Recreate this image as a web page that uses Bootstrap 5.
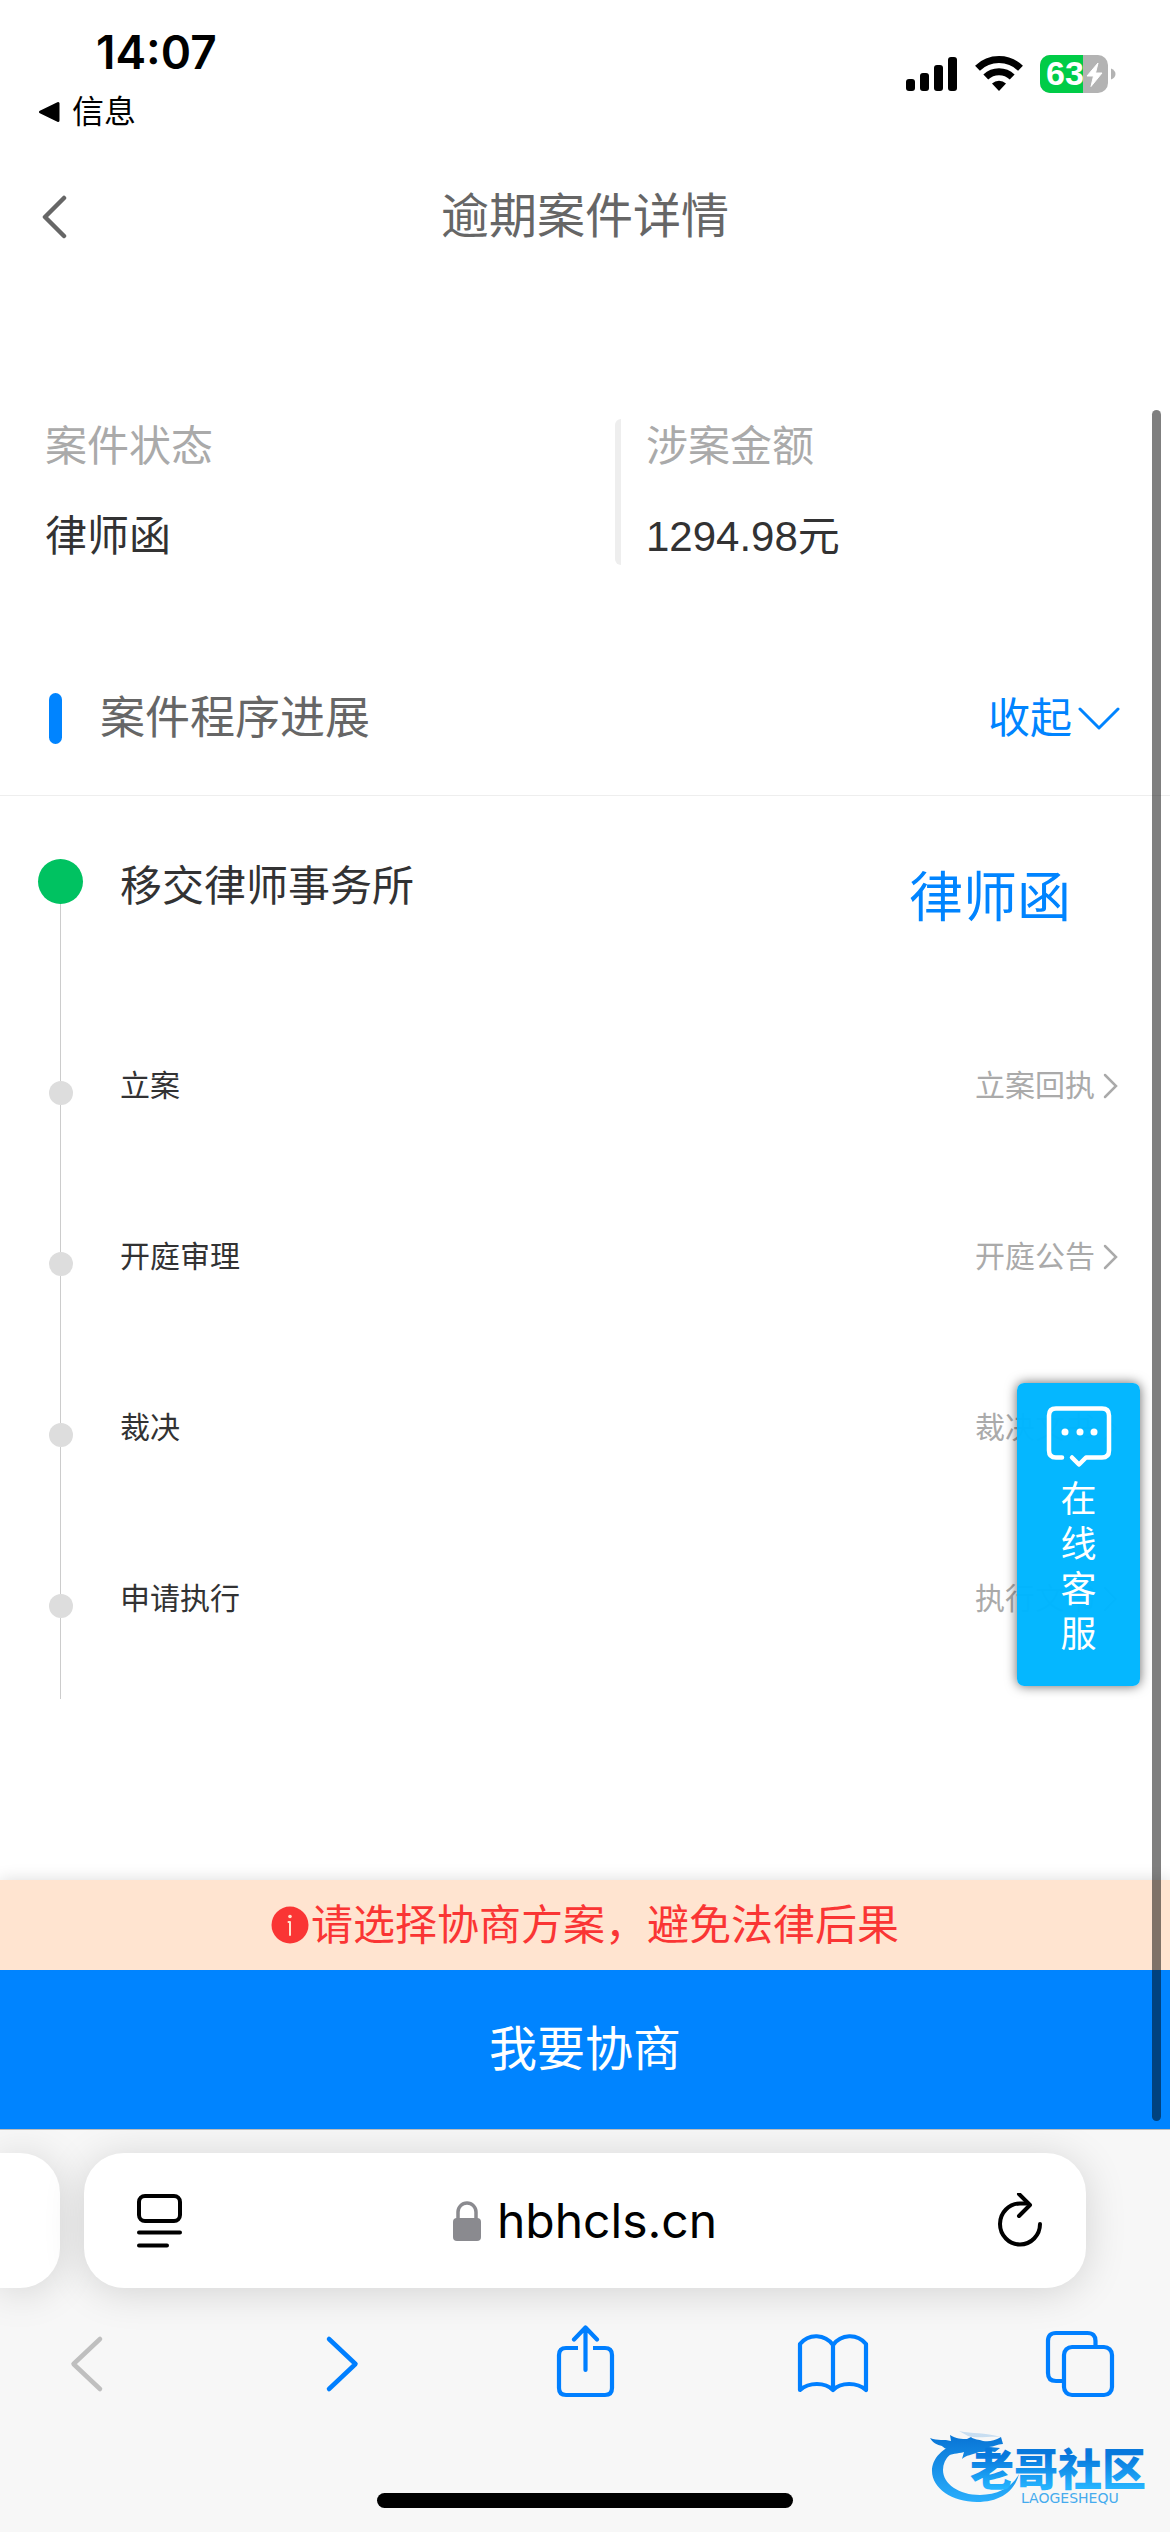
<!DOCTYPE html>
<html lang="zh-CN">
<head>
<meta charset="utf-8">
<meta name="viewport" content="width=device-width, initial-scale=1">
<title>逾期案件详情</title>
<link href="https://cdn.jsdelivr.net/npm/bootstrap@5.3.0/dist/css/bootstrap.min.css" rel="stylesheet">
<style>
  body { font-family: "Liberation Sans", "Noto Sans CJK SC", sans-serif; color: #323233; background: #fff; font-size: 42px; line-height: 56px; }
  svg { display: block; flex: none; }
  a { text-decoration: none; }
  .sys-font { font-family: Inter, "Noto Sans CJK SC", sans-serif; color: #000; }
  .plain-btn { border: 0; background: none; padding: 0; color: inherit; }

  /* status bar */
  .status { height: 151px; padding: 24px 54px 0 38px; }
  .clock { font-size: 46px; font-weight: 600; line-height: 57px; padding-left: 58px; }
  .back-app { font-size: 32px; line-height: 62px; gap: 12px; color: #000; }
  .signals { gap: 17px; padding-top: 31px; }

  /* page title */
  .titlebar { height: 132px; padding: 0 42px; color: #666; }
  .titlebar h1 { font-size: 48px; line-height: 64px; font-weight: 400; }
  .side-slot { width: 60px; }

  /* case facts */
  .facts { padding-top: 136px; }
  .fact-state { flex: 0 0 615px; max-width: 53%; padding-left: 45px; }
  .fact-amount { border-left: 6px solid #eee; border-radius: 6px 0 0 6px; padding-left: 25px; }
  .facts dt { font-weight: 400; color: #aaa; margin-bottom: 34px; }
  .facts dd { margin: 0; }

  /* progress */
  .section-head { height: 155px; margin-top: 76px; padding: 0 50px 0 49px; border-bottom: 1px solid #eee; }
  .section-head h2 { font-size: 45px; line-height: 60px; padding-top: 2px; font-weight: 400; color: #666; }
  .accent { width: 13px; height: 51px; border-radius: 7px; background: #0084ff; margin-right: 38px; }
  .brand-blue { color: #0084ff; }
  .fold { gap: 6px; padding-top: 2px; }
  .steps { padding: 63px 51px 0 37px; }
  .step { min-height: 171px; font-size: 30px; line-height: 42px; }
  .step:last-child { min-height: 121px; }
  .step-current { min-height: 206px; font-size: 42px; line-height: 56px; }
  .rail { width: 47px; margin-right: 36px; }
  .rail::before { content: ""; width: 1px; height: 16px; background: #ccc; }
  .rail::after { content: ""; width: 1px; flex: 1; background: #ccc; }
  .rail i { width: 24px; height: 24px; border-radius: 50%; background: #ddd; }
  .step-current .rail::before { display: none; }
  .step-current .rail i { width: 45px; height: 45px; background: #00c261; }
  .doc-link { color: #aaa; gap: 8px; height: 42px; }
  .letter-link { font-size: 54px; line-height: 78px; padding-right: 48px; color: #0084ff; }

  /* floating service button */
  .service { top: 1383px; right: 30px; width: 123px; height: 303px; padding: 23px 0 0; gap: 7px; border: 0; border-radius: 7px; background: rgba(0, 182, 255, .98); box-shadow: 0 0 12px rgba(0, 0, 0, .6); color: #fff; font-size: 36px; line-height: 45px; }
  .service span { width: 36px; }
  .scroll-thumb { top: 410px; right: 9px; width: 9px; height: 1711px; border-radius: 5px; background: rgba(0, 0, 0, .5); }

  /* bottom action */
  .notice { height: 90px; background: #ffe4d0; color: #fa3534; box-shadow: 0 0 16px rgba(0, 0, 0, .14); gap: 2px; }
  .notice span { padding-top: 2px; }
  .negotiate { height: 159px; border: 0; border-radius: 0; background: #0084ff; color: #fff; font-size: 48px; line-height: 64px; }

  /* browser chrome */
  .chrome { background: #f7f7f7; border-top: 1px solid #bbb; padding: 23px 0 24px; overflow: hidden; }
  .tabs-row { gap: 24px; padding-right: 84px; }
  .tab-card { height: 135px; background: #fff; box-shadow: 0 4px 40px rgba(0, 0, 0, .15); border-radius: 40px; }
  .tab-prev { width: 60px; border-radius: 0 40px 40px 0; }
  .tab-main { padding: 0 44px; }
  .address { font-size: 48px; line-height: 60px; gap: 16px; }
  .tools { padding: 37px 54px 0; }
  .home-row { padding-top: 95px; }
  .home-bar { width: 416px; height: 15px; border-radius: 8px; background: #000; }
  .site-mark { right: 16px; bottom: 22px; }
</style>
<script src="https://cdn.jsdelivr.net/npm/bootstrap@5.3.0/dist/js/bootstrap.bundle.min.js"></script>
</head>
<body>
<div class="min-vh-100 d-flex flex-column position-relative overflow-hidden">

  <header>
    <div class="status sys-font d-flex justify-content-between align-items-start">
      <div>
        <div class="clock">14:07</div>
        <a href="#" class="back-app d-flex align-items-center">
          <svg width="22" height="22" viewBox="0 0 22 22"><path d="M20 2.500v17L2.500 11z" fill="#000" stroke="#000" stroke-width="3" stroke-linejoin="round"/></svg>
          <span>信息</span>
        </a>
      </div>
      <div class="signals d-flex">
        <svg width="52" height="38" viewBox="0 0 52 38"><rect x="0" y="24" width="9" height="12" rx="3"/><rect x="14" y="18" width="9" height="18" rx="3"/><rect x="28" y="10" width="9" height="26" rx="3"/><rect x="42" y="2" width="9" height="34" rx="3"/></svg>
        <svg width="48" height="38" viewBox="0 0 48 38"><g fill="none" stroke="#000" stroke-width="7"><path d="M2.500 13.200a31 31 0 0 1 43 0"/><path d="M10.800 22a19 19 0 0 1 26.400 0"/></g><path d="M24 36l-7-7.500a10.500 10.500 0 0 1 14 0z"/></svg>
        <svg width="76" height="38" viewBox="0 0 76 38">
          <defs><clipPath id="cell"><rect width="68" height="38" rx="10"/></clipPath></defs>
          <g clip-path="url(#cell)"><rect width="68" height="38" fill="#b3b3b3"/><rect width="43" height="38" fill="#00cc47"/></g>
          <path d="M71 13.500q4.500 2 4.500 5.500t-4.500 5.500z" fill="#b3b3b3"/>
          <text x="6" y="30" font-family="Liberation Sans, sans-serif" font-size="34" font-weight="700" fill="#fff">63</text>
          <path d="M58 8L47 21h6.500L51 31.500 62 18h-6.500z" fill="#fff" stroke="#fff" stroke-linejoin="round"/>
        </svg>
      </div>
    </div>
    <nav class="titlebar d-flex justify-content-between align-items-center" aria-label="页面">
      <button type="button" class="plain-btn side-slot" aria-label="返回"><svg width="26" height="44" viewBox="0 0 26 44"><path d="M22 3L3 22l19 19" fill="none" stroke="#666" stroke-width="4.500" stroke-linecap="round" stroke-linejoin="round"/></svg></button>
      <h1 class="m-0">逾期案件详情</h1>
      <span class="side-slot"></span>
    </nav>
  </header>

  <main>
    <div class="facts d-flex">
      <dl class="fact-state m-0"><dt>案件状态</dt><dd>律师函</dd></dl>
      <dl class="fact-amount flex-grow-1 m-0"><dt>涉案金额</dt><dd>1294.98元</dd></dl>
    </div>

    <section>
      <div class="section-head d-flex align-items-center">
        <span class="accent"></span>
        <h2 class="m-0 me-auto">案件程序进展</h2>
        <button type="button" class="plain-btn fold brand-blue d-flex align-items-center">收起
          <svg width="42" height="24" viewBox="0 0 42 24"><path d="M2 2l19 19L40 2" fill="none" stroke="#0084ff" stroke-width="3" stroke-linecap="round" stroke-linejoin="round"/></svg>
        </button>
      </div>
      <ol class="steps list-unstyled m-0">
        <li class="step step-current d-flex">
          <div class="rail d-flex flex-column align-items-center"><i></i></div>
          <span class="me-auto">移交律师事务所</span>
          <a href="#" class="letter-link">律师函</a>
        </li>
        <li class="step d-flex">
          <div class="rail d-flex flex-column align-items-center"><i></i></div>
          <span class="me-auto">立案</span>
          <a href="#" class="doc-link d-flex align-items-center">立案回执<svg width="16" height="26" viewBox="0 0 16 26"><path d="M2 2l11 11L2 24" fill="none" stroke="#aaa" stroke-width="2.500" stroke-linecap="round"/></svg></a>
        </li>
        <li class="step d-flex">
          <div class="rail d-flex flex-column align-items-center"><i></i></div>
          <span class="me-auto">开庭审理</span>
          <a href="#" class="doc-link d-flex align-items-center">开庭公告<svg width="16" height="26" viewBox="0 0 16 26"><path d="M2 2l11 11L2 24" fill="none" stroke="#aaa" stroke-width="2.500" stroke-linecap="round"/></svg></a>
        </li>
        <li class="step d-flex">
          <div class="rail d-flex flex-column align-items-center"><i></i></div>
          <span class="me-auto">裁决</span>
          <a href="#" class="doc-link d-flex align-items-center">裁决文书<svg width="16" height="26" viewBox="0 0 16 26"><path d="M2 2l11 11L2 24" fill="none" stroke="#aaa" stroke-width="2.500" stroke-linecap="round"/></svg></a>
        </li>
        <li class="step d-flex">
          <div class="rail d-flex flex-column align-items-center"><i></i></div>
          <span class="me-auto">申请执行</span>
          <a href="#" class="doc-link d-flex align-items-center">执行文书<svg width="16" height="26" viewBox="0 0 16 26"><path d="M2 2l11 11L2 24" fill="none" stroke="#aaa" stroke-width="2.500" stroke-linecap="round"/></svg></a>
        </li>
      </ol>
    </section>
  </main>

  <div class="mt-auto">
    <div class="notice d-flex justify-content-center align-items-center">
      <svg width="38" height="38" viewBox="0 0 38 38"><circle cx="19" cy="19" r="18.500" fill="#fa3534"/><circle cx="19" cy="10.500" r="1.800" fill="#ffe4d0"/><path d="M17.500 16H19v13" fill="none" stroke="#ffe4d0" stroke-width="2" stroke-linecap="round" stroke-linejoin="round"/></svg>
      <span>请选择协商方案，避免法律后果</span>
    </div>
    <button type="button" class="negotiate btn w-100 d-block">我要协商</button>
  </div>

  <footer class="chrome sys-font position-relative">
    <div class="tabs-row d-flex">
      <div class="tab-card tab-prev"></div>
      <div class="tab-card tab-main flex-grow-1 d-flex justify-content-between align-items-center">
        <button type="button" class="plain-btn" aria-label="页面菜单"><svg width="54" height="56" viewBox="0 0 54 56"><g fill="none" stroke="#000" stroke-width="4" stroke-linecap="round"><rect x="11" y="3" width="41" height="25" rx="6"/><path d="M11 39.500h41M11 52.500h28"/></g></svg></button>
        <button type="button" class="plain-btn address d-flex align-items-center"><svg width="28" height="40" viewBox="0 0 28 40"><rect x="0" y="17" width="28" height="23" rx="4" fill="#8a8a8f"/><path d="M5 19v-8a9 9 0 0 1 18 0v8" fill="none" stroke="#8a8a8f" stroke-width="3.500"/></svg>hbhcls.cn</button>
        <button type="button" class="plain-btn" aria-label="刷新"><svg width="54" height="56" viewBox="0 0 54 56"><g fill="none" stroke="#000" stroke-width="4" stroke-linecap="round" stroke-linejoin="round"><path d="M52 31a20 20.500 0 1 1-20-20.500h8"/><path d="M31 1l11 11L31 23"/></g></svg></button>
      </div>
    </div>
    <div class="tools d-flex justify-content-between">
      <button type="button" class="plain-btn" aria-label="后退"><svg width="72" height="72" viewBox="0 0 72 72"><path d="M46 13L19.500 38 46 63" fill="none" stroke="#bfbfbf" stroke-width="4.500" stroke-linecap="round" stroke-linejoin="round"/></svg></button>
      <button type="button" class="plain-btn" aria-label="前进"><svg width="72" height="72" viewBox="0 0 72 72"><path d="M27 13l26.500 25L27 63" fill="none" stroke="#007fff" stroke-width="4.500" stroke-linecap="round" stroke-linejoin="round"/></svg></button>
      <button type="button" class="plain-btn" aria-label="分享"><svg width="72" height="73" viewBox="0 0 72 73"><g fill="none" stroke="#007fff" stroke-width="4.200" stroke-linejoin="round"><path d="M29 23H17q-7 0-7 7v33q0 7 7 7h39q7 0 7-7V30q0-7-7-7H44"/><path d="M36.500 45V3.500M25 14.500l11.500-12 11.500 12" stroke-linecap="round"/></g></svg></button>
      <button type="button" class="plain-btn" aria-label="书签"><svg width="72" height="72" viewBox="0 0 72 72"><path d="M36 19C28 8 12 7 3 18v46c9-8 25-8 33 0 8-8 24-8 33 0V18C60 7 44 8 36 19zv45" fill="none" stroke="#007fff" stroke-width="4.200" stroke-linejoin="round"/></svg></button>
      <button type="button" class="plain-btn" aria-label="标签页"><svg width="72" height="72" viewBox="0 0 72 72"><g fill="none" stroke="#007fff" stroke-width="4.200"><path d="M51.500 20v-5q0-8-8-8H12q-8 0-8 8v32q0 8 8 8h7"/><rect x="20" y="21" width="48" height="48" rx="8"/></g></svg></button>
    </div>
    <div class="home-row d-flex justify-content-center"><div class="home-bar"></div></div>

    <svg class="site-mark position-absolute" width="224" height="80" viewBox="0 0 224 80" role="img" aria-label="老哥社区">
      <defs><linearGradient id="sea" gradientUnits="userSpaceOnUse" x1="0" y1="10" x2="0" y2="76"><stop offset="0" stop-color="#0a78d8"/><stop offset="1" stop-color="#2cb2ff"/></linearGradient>
      <linearGradient id="ink" gradientUnits="userSpaceOnUse" x1="0" y1="26" x2="0" y2="58"><stop offset="0" stop-color="#0878dc"/><stop offset="1" stop-color="#25b4ff"/></linearGradient></defs>
      <g fill="url(#sea)">
        <path d="M31 12C12 17 2 29 2 41c0 17 20 31 45 31 21 0 37-9 42-28-7 14-22 21-39 21-21 0-37-11-37-25 0-12 10-21 27-26z"/>
        <path d="M0 8c8 3 14 1 21 3l-1-6c6 4 12 4 17 4l4-2c3 3 8 2 12 4 6 1 11 0 18-4l2 7c-6 0-9 3-14 3l11 1-5 4c-7-1-10 0-16 0-7 3-13 3-17 7l2-7c-7 2-12 1-18 5l5-7c-5-1-7-2-9-4-5-1-9-3-12-8z"/>
        <path d="M29 1c14 3 25 1 42 6-13-1-23 2-33-1z" opacity=".2"/>
      </g>
      <text x="40" y="56" font-family="Noto Sans CJK SC, sans-serif" font-size="44" font-weight="900" fill="url(#ink)">老哥社区</text>
      <text x="91" y="73" font-family="DejaVu Sans, sans-serif" font-size="14" fill="#45abee">LAOGESHEQU</text>
    </svg>
  </footer>

  <button type="button" class="service position-absolute d-flex flex-column align-items-center">
    <svg width="66" height="64" viewBox="0 0 66 64"><g fill="none" stroke="#fff" stroke-width="4.500" stroke-linecap="round" stroke-linejoin="round"><path d="M16 51.500h-6q-7 0-7-7v-35q0-7 7-7h46q7 0 7 7v35q0 7-7 7H40l-7 7-7-7"/></g><g fill="#fff"><circle cx="19" cy="26" r="3.500"/><circle cx="34" cy="26" r="3.500"/><circle cx="48" cy="26" r="3.500"/></g></svg>
    <span>在线客服</span>
  </button>
  <div class="scroll-thumb position-absolute" aria-hidden="true"></div>
</div>
</body>
</html>
